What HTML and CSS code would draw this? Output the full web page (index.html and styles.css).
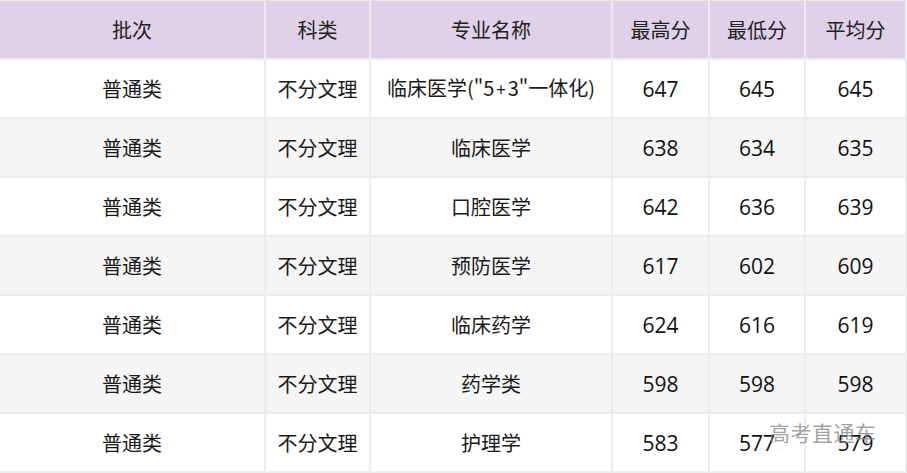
FILE: index.html
```html
<!DOCTYPE html>
<html lang="zh">
<head>
<meta charset="utf-8">
<link rel="stylesheet" href="styles.css">
</head>
<body>
<div class="wrap">
<table class="score">
<colgroup>
<col class="c1"><col class="c2"><col class="c3"><col class="c4"><col class="c5"><col class="c6">
</colgroup>
<thead>
<tr><th>批次</th><th>科类</th><th>专业名称</th><th>最高分</th><th>最低分</th><th>平均分</th></tr>
</thead>
<tbody>
<tr><td>普通类</td><td>不分文理</td><td>临床医学("5<span class="plus">+</span>3"一体化)</td><td class="n">647</td><td class="n">645</td><td class="n">645</td></tr>
<tr class="alt"><td>普通类</td><td>不分文理</td><td>临床医学</td><td class="n">638</td><td class="n">634</td><td class="n">635</td></tr>
<tr><td>普通类</td><td>不分文理</td><td>口腔医学</td><td class="n">642</td><td class="n">636</td><td class="n">639</td></tr>
<tr class="alt"><td>普通类</td><td>不分文理</td><td>预防医学</td><td class="n">617</td><td class="n">602</td><td class="n">609</td></tr>
<tr><td>普通类</td><td>不分文理</td><td>临床药学</td><td class="n">624</td><td class="n">616</td><td class="n">619</td></tr>
<tr class="alt"><td>普通类</td><td>不分文理</td><td>药学类</td><td class="n">598</td><td class="n">598</td><td class="n">598</td></tr>
<tr><td>普通类</td><td>不分文理</td><td>护理学</td><td class="n">583</td><td class="n">577</td><td class="n">579</td></tr>
</tbody>
</table>
<div class="watermark">高考直通车</div>
</div>
</body>
</html>
```
FILE: styles.css
```css
html, body {
  margin: 0;
  padding: 0;
  background: #ffffff;
}
.wrap {
  position: relative;
  width: 907px;
  height: 473px;
  overflow: hidden;
}
.score {
  width: 907px;
  table-layout: fixed;
  border-collapse: separate;
  border-spacing: 0;
  border-top: 1px solid #ececec;
  font-family: "Noto Sans CJK SC", "Noto Sans", sans-serif;
  font-size: 20px;
  color: #1a1a1a;
}
.c1 { width: 266px; }
.c2 { width: 105px; }
.c3 { width: 242px; }
.c4 { width: 97px; }
.c5 { width: 96px; }
.c6 { width: 101px; }
.score th, .score td {
  height: 57px;
  padding: 0;
  box-sizing: content-box;
  text-align: center;
  vertical-align: middle;
  border-right: 2px solid #ececec;
  border-bottom: 2px solid #ececec;
  font-weight: normal;
  line-height: 24px;
  white-space: nowrap;
}
.score th {
  background: #dfd1e8;
  color: #222;
}
.score tr.alt td {
  background: #f5f5f5;
}
.plus {
  padding: 0 2px;
  font-size: 17px;
}
.score td.n {
  font-family: "Open Sans", "Noto Sans", sans-serif;
  font-size: 21px;
  font-weight: 500;
  color: #111;
}
.watermark {
  position: absolute;
  left: 769px;
  top: 418px;
  font-family: "Noto Sans CJK SC", sans-serif;
  font-size: 21px;
  line-height: 28px;
  color: rgba(130, 130, 130, 0.75);
  letter-spacing: 0.5px;
}
```
